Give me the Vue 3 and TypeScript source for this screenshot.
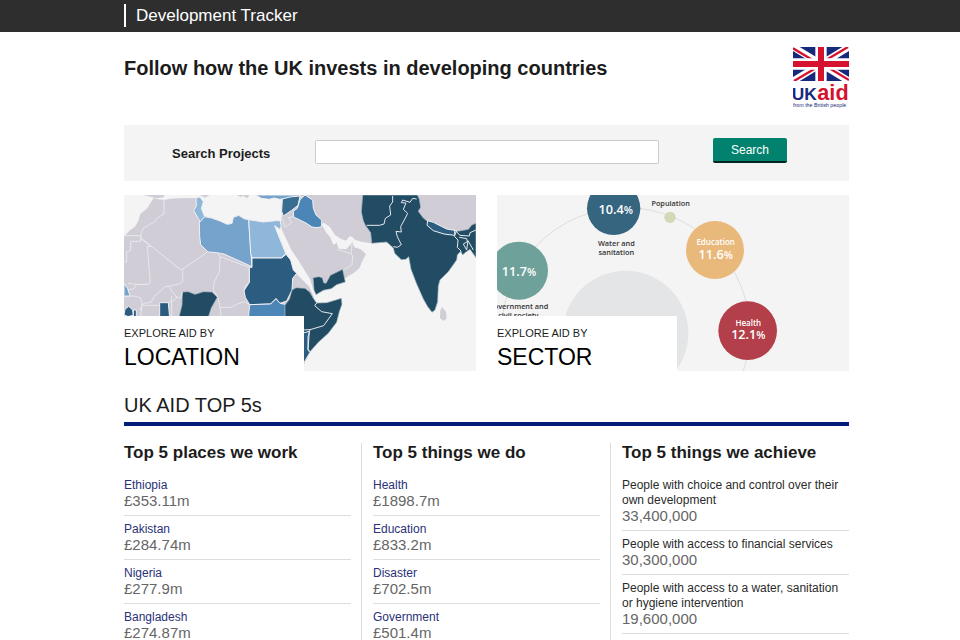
<script setup lang="ts">
interface Entry {
  label: string
  value: string
}

interface TopList {
  title: string
  linked: boolean
  entries: Entry[]
}

const lists: TopList[] = [
  {
    title: 'Top 5 places we work',
    linked: true,
    entries: [
      { label: 'Ethiopia', value: '£353.11m' },
      { label: 'Pakistan', value: '£284.74m' },
      { label: 'Nigeria', value: '£277.9m' },
      { label: 'Bangladesh', value: '£274.87m' },
    ],
  },
  {
    title: 'Top 5 things we do',
    linked: true,
    entries: [
      { label: 'Health', value: '£1898.7m' },
      { label: 'Education', value: '£833.2m' },
      { label: 'Disaster', value: '£702.5m' },
      { label: 'Government', value: '£501.4m' },
    ],
  },
  {
    title: 'Top 5 things we achieve',
    linked: false,
    entries: [
      { label: 'People with choice and control over their own development', value: '33,400,000' },
      { label: 'People with access to financial services', value: '30,300,000' },
      { label: 'People with access to a water, sanitation or hygiene intervention', value: '19,600,000' },
    ],
  },
]
</script>

<template>
  <div class="page">
    <header class="topbar">
      <a class="brand" href="#">Development Tracker</a>
    </header>

    <main class="content">
      <div class="intro">
        <h1>Follow how the UK invests in developing countries</h1>
        <svg class="logo" viewBox="0 0 168 186" role="img" aria-label="UK aid from the British people">
          <svg x="0" y="0" width="168" height="102" viewBox="0 0 168 102">
            <rect width="168" height="102" fill="#16297c" />
            <path d="M0 0L168 102M168 0L0 102" stroke="#fff" stroke-width="21" />
            <path d="M0 4L70 46M98 57L168 99M165 0L98 40M70 62L3 102" stroke="#d6132f" stroke-width="7" />
            <path d="M84 0V102M0 51H168" stroke="#fff" stroke-width="34" />
            <path d="M84 0V102M0 51H168" stroke="#d6132f" stroke-width="18" />
          </svg>
          <text class="logo-uk" x="-4" y="158">UK</text>
          <text class="logo-aid" x="73" y="158">aid</text>
          <text class="logo-tag" x="0" y="180">from the British people</text>
        </svg>
      </div>

      <form class="search" @submit.prevent>
        <label for="project-search">Search Projects</label>
        <input id="project-search" type="text" />
        <button type="submit">Search</button>
      </form>

      <div class="cards">
        <a class="card" href="#location">
          <svg class="art map" viewBox="12 15 1056 528" preserveAspectRatio="xMinYMin slice" aria-hidden="true">
            <!-- Africa -->
            <path class="land" d="M12 140L28 122 45 110 55 92 61 72 82 55 92 38 101 24 115 28 132 30 152 26 180 25 228 24 240 21 250 35 244 55 246 76 275 85 300 93 322 103 336 100 340 82 356 76 372 86 400 90 430 96 468 92 480 92 484 106 478 108 462 106 470 125 485 155 498 193 512 210 520 240 528 250 540 262 568 290 580 318 590 400 540 543H12Z" />
            <!-- Middle East and Iran -->
            <path class="land" d="M487 22L540 15H1068V180L830 180 800 158 755 160 728 156 706 150 698 142 690 138 678 152 662 146 645 135 630 112 612 98 605 103 617 125 632 144 640 164 650 158 656 176 678 178 690 166 697 155 703 172 722 178 738 192 726 215 718 235 700 250 676 264 610 302 588 314 579 296 570 267 550 235 528 200 514 180 500 150 486 120 481 105 486 80 484 55Z" />
            <path class="land" d="M68 15H132V22L108 25 92 20ZM240 15H268L255 23ZM365 15L388 15 382 25ZM350 15L375 15 362 21Z" />
            <path class="tone-2" d="M228 24L240 21 250 35 244 55 254 80 242 98 234 84 221 62 229 48Z" />
            <path class="tone-3" d="M254 80L275 84 300 93 322 103 336 100 340 82 356 76 372 86 386 89 396 230 312 192 290 188 264 186 242 164 239 140 238 98Z" />
            <path class="tone-2" d="M386 89L430 96 468 92 480 92 484 108 479 118 464 107 480 148 497 190 485 204H396L392 190Z" />
            <path class="tone-5" d="M396 204H485L498 193 512 210 520 240 530 250 518 265 516 300 500 333 480 340 468 326 452 342 389 344 376 322 372 302 388 277 388 232H396Z" />
            <path class="tone-4" d="M389 344L452 342 468 326 480 340 500 344 495 385H385Z" />
            <path class="tone-6" d="M187 306L205 305 225 313 250 305 276 306 292 322 274 354 264 385H176L186 345Z" />
            <path class="tone-5" d="M119 338H145L149 385H119ZM15 358L26 349 38 360 40 376 24 380 12 374ZM40 360H49V380H40Z" />
            <path class="tone-3" d="M12 280L23 296 30 318 12 319Z" />
            <path class="tone-3" d="M405 15H540V22L515 25 495 26 479 28 462 24 448 28 424 25Z" />
            <path class="syria" d="M487 27L510 21 540 18 534 46 515 61 490 78 485 64Z" />
            <path class="tone-4" d="M520 64L532 55 540 29 555 15 578 30 580 55 588 75 605 90 605 109 594 113 576 111 558 99 521 81Z" />
            <path class="tone-6" d="M579 263L596 260 607 263 611 278 618 280 631 256 668 238 676 276 650 284 634 296 610 301 588 314 582 300Z" />
            <path class="tone-6" d="M516 300L528 293 555 295 570 307 580 325 590 339 620 338 664 325 666 343 658 365 650 397 625 430 595 457 570 485 553 518 540 543 495 400V345L508 328Z" />
            <path class="tone-5" d="M545 430L568 424 564 480 570 487 552 518 540 530V430Z" />
            <!-- South Asia -->
            <path class="tone-6" d="M728 15H892L898 27 902 52 895 64 910 84 925 96 950 108 990 125 1018 123 1045 118 1055 105 1068 100V203L1050 178 1035 188 1028 195 1022 184 1012 195 1010 210 985 245 960 270 955 288 953 335 945 360 936 367 923 350 910 327 890 282 873 238 866 200 858 208 844 209 824 190 820 174 800 156 755 160 752 128 736 106 730 93 724 66Z" />
            <path class="tone-5" d="M923 92L940 97 980 117 1010 122 1004 136 972 132 940 122 921 106Z" />
            <path class="land" d="M966 350L978 366 980 386 970 393 960 384 961 362Z" />
            <path class="borders" d="M132 28V72L112 84 104 95 70 114 62 138 66 146 180 238 188 237 261 187M12 137H62V154H32V182L20 185V216H12M62 146L94 169H82L91 278 83 283H48L24 280M188 238V274L175 283 148 288 134 291 122 303 100 322 94 336 68 342 60 360M148 290L160 310 172 322 158 334 145 336M155 318V385M187 306L182 325 165 320M292 188L300 200 298 245 282 278 280 300 294 322M300 200L388 232V277L376 287 372 304M294 322L300 352 332 352 352 342 372 335 389 344M304 385L300 352M12 319L43 318 62 324 66 342 62 385M68 346H119M83 283L48 284 42 296 24 300M482 85L490 90 495 112 515 98 505 83 521 80M652 178L690 190 698 196 696 225 670 240M696 160L694 190" />
            <path class="borders" d="M818 18V36L809 48 812 75 796 85 792 102 778 106 740 106M844 38L858 39 850 58 863 70 856 84 842 110 844 126 828 124 832 140 844 164 832 172 820 170M844 38L848 30 870 37 878 25 890 27M590 339L584 347 605 365 637 371 611 407 570 419 545 420M570 419L564 440V478L570 485M1004 120L1020 136 1048 138 1050 128 1068 120M1004 120V140L1014 150 1012 172 1024 184M1018 142L1040 146 1042 155 1030 162 1040 180 1044 152 1060 180" />
          </svg>
          <span class="caption">
            <span class="kicker">EXPLORE AID BY</span>
            <span class="name">LOCATION</span>
          </span>
        </a>

        <a class="card" href="#sector">
          <svg class="art" viewBox="21 15 1056 528" preserveAspectRatio="xMinYMin slice" aria-hidden="true">
            <circle cx="407" cy="430" r="188" fill="#e4e5e7" />
            <circle cx="407" cy="425" r="372" fill="none" stroke="#dededc" stroke-width="3" />
            <circle cx="371" cy="55" r="80" fill="#36657f" />
            <circle cx="87" cy="242" r="87" fill="#6ea199" />
            <circle cx="540" cy="82" r="17" fill="#d3d8b5" />
            <circle cx="675" cy="180" r="87" fill="#e9b97b" />
            <circle cx="773" cy="422" r="88" fill="#b33f4a" />
            <g class="figure">
              <text x="377" y="72">10.4<tspan class="percent">%</tspan></text>
              <text x="87" y="258">11.7<tspan class="percent">%</tspan></text>
              <text x="677" y="207">11.6<tspan class="percent">%</tspan></text>
              <text x="775" y="447">12.1<tspan class="percent">%</tspan></text>
            </g>
            <g class="tag light">
              <text x="677" y="165">Education</text>
              <text x="775" y="408">Health</text>
            </g>
            <g class="tag">
              <text x="542" y="48">Population</text>
              <text x="379" y="168">Water and</text>
              <text x="379" y="195">sanitation</text>
              <text x="85" y="358">Government and</text>
              <text x="85" y="385">civil society</text>
            </g>
          </svg>
          <span class="caption">
            <span class="kicker">EXPLORE AID BY</span>
            <span class="name">SECTOR</span>
          </span>
        </a>
      </div>

      <h2>UK AID TOP 5s</h2>

      <div class="columns">
        <section v-for="list in lists" :key="list.title" class="column">
          <h3>{{ list.title }}</h3>
          <ul>
            <li v-for="entry in list.entries" :key="entry.label">
              <a v-if="list.linked" class="label" href="#">{{ entry.label }}</a>
              <span v-else class="label">{{ entry.label }}</span>
              <span class="value">{{ entry.value }}</span>
            </li>
          </ul>
        </section>
      </div>
    </main>
  </div>
</template>

<style>
body {
  margin: 0;
  background: #fff;
}
</style>

<style scoped>
.page {
  font-family: "Liberation Sans", Arial, sans-serif;
  color: #1c1c1c;
}

.topbar {
  display: flex;
  align-items: center;
  height: 32px;
  padding: 0 111px 2px 124px;
  box-sizing: border-box;
  background: #2e2e2e;
}

.brand {
  padding-left: 10px;
  border-left: 2px solid #fff;
  color: #fff;
  font-size: 17px;
  line-height: 23px;
  text-decoration: none;
}

.content {
  padding: 15px 111px 0 124px;
}

.intro {
  display: flex;
  justify-content: space-between;
  align-items: flex-start;
}

h1 {
  margin: 9px 0 0;
  font-size: 20px;
  line-height: 24px;
}

.logo {
  width: 56px;
  height: 62px;
  flex: none;
}

.logo text {
  font-family: "Liberation Sans", Arial, sans-serif;
  font-weight: bold;
}

.logo-uk {
  font-size: 52px;
  fill: #16297c;
}

.logo-aid {
  font-size: 65px;
  fill: #d6132f;
}

.logo .logo-tag {
  font-size: 16px;
  font-weight: normal;
  fill: #16297c;
}

.search {
  display: flex;
  align-items: center;
  height: 56px;
  margin-top: 16px;
  padding: 0 62px 0 48px;
  box-sizing: border-box;
  background: #f4f4f4;
}

.search label {
  width: 143px;
  font-size: 13px;
  font-weight: bold;
}

.search input {
  flex: 1;
  min-width: 0;
  height: 24px;
  margin: 0 54px 3px 0;
  padding: 0 6px;
  box-sizing: border-box;
  border: 1px solid #ccc;
  border-radius: 2px;
  background: #fff;
  font: inherit;
  font-size: 13px;
}

.search button {
  width: 74px;
  height: 25px;
  margin-bottom: 5px;
  padding: 0;
  border: 0;
  border-bottom: 2px solid #00261f;
  border-radius: 2px;
  background: #00826e;
  color: #fff;
  font: inherit;
  font-size: 12px;
}

.cards {
  display: grid;
  grid-template-columns: 1fr 1fr;
  gap: 21px;
  margin-top: 14px;
}

.card {
  position: relative;
  display: block;
  height: 176px;
  overflow: hidden;
  background: #f4f4f4;
  color: #000;
  text-decoration: none;
}

.art {
  display: block;
  width: 100%;
  height: 100%;
}

.map path {
  stroke: #f1f1f4;
  stroke-width: 3;
  stroke-linejoin: round;
}

.map .land {
  fill: #d0cdd7;
  stroke: none;
}

.map .tone-2 {
  fill: #8fb7da;
}

.map .tone-3 {
  fill: #76a3cc;
}

.map .tone-4 {
  fill: #4c86b7;
}

.map .tone-5 {
  fill: #2c5d81;
}

.map .syria {
  fill: #386c91;
}

.map .tone-6 {
  fill: #214c63;
  stroke: #a9bdc9;
  stroke-width: 2;
}

.map .borders {
  fill: none;
  stroke: #e6e8ee;
}

.figure,
.tag {
  font-family: "Open Sans", "Noto Sans", sans-serif;
  font-weight: 600;
  text-anchor: middle;
}

.figure {
  font-size: 38px;
  fill: #fff;
}

.percent {
  font-size: 32px;
}

.tag {
  font-size: 22px;
  fill: #333;
}

.tag.light {
  font-size: 24px;
  fill: #fff;
}

.caption {
  position: absolute;
  left: 0;
  bottom: 0;
  display: flex;
  flex-direction: column;
  width: 180px;
  height: 55px;
  padding-top: 9px;
  box-sizing: border-box;
  background: #fff;
}

.kicker {
  font-size: 11px;
  line-height: 16px;
  color: #1c1c1c;
}

.name {
  font-size: 23px;
  line-height: 32px;
}

h2 {
  margin: 22px 0 0;
  padding-bottom: 5px;
  border-bottom: 4px solid #001e78;
  font-size: 20px;
  font-weight: normal;
  line-height: 24px;
}

.columns {
  display: grid;
  grid-template-columns: repeat(3, 1fr);
  column-gap: 22px;
  margin-top: 17px;
}

.column {
  position: relative;
}

.column + .column::before {
  content: "";
  position: absolute;
  top: 0;
  bottom: 0;
  left: -12px;
  width: 1px;
  background: #ddd;
}

h3 {
  margin: 0;
  font-size: 17px;
  line-height: 20px;
}

ul {
  margin: 9px 0 0;
  padding: 0;
  list-style: none;
}

li {
  display: flex;
  flex-direction: column;
  align-items: flex-start;
  padding: 6px 0;
  border-bottom: 1px solid #ddd;
}

.label {
  font-size: 12px;
  line-height: 15px;
  color: #2b2b2b;
  text-decoration: none;
}

a.label {
  color: #2b3178;
}

.value {
  font-size: 15px;
  line-height: 16px;
  color: #666;
}
</style>
